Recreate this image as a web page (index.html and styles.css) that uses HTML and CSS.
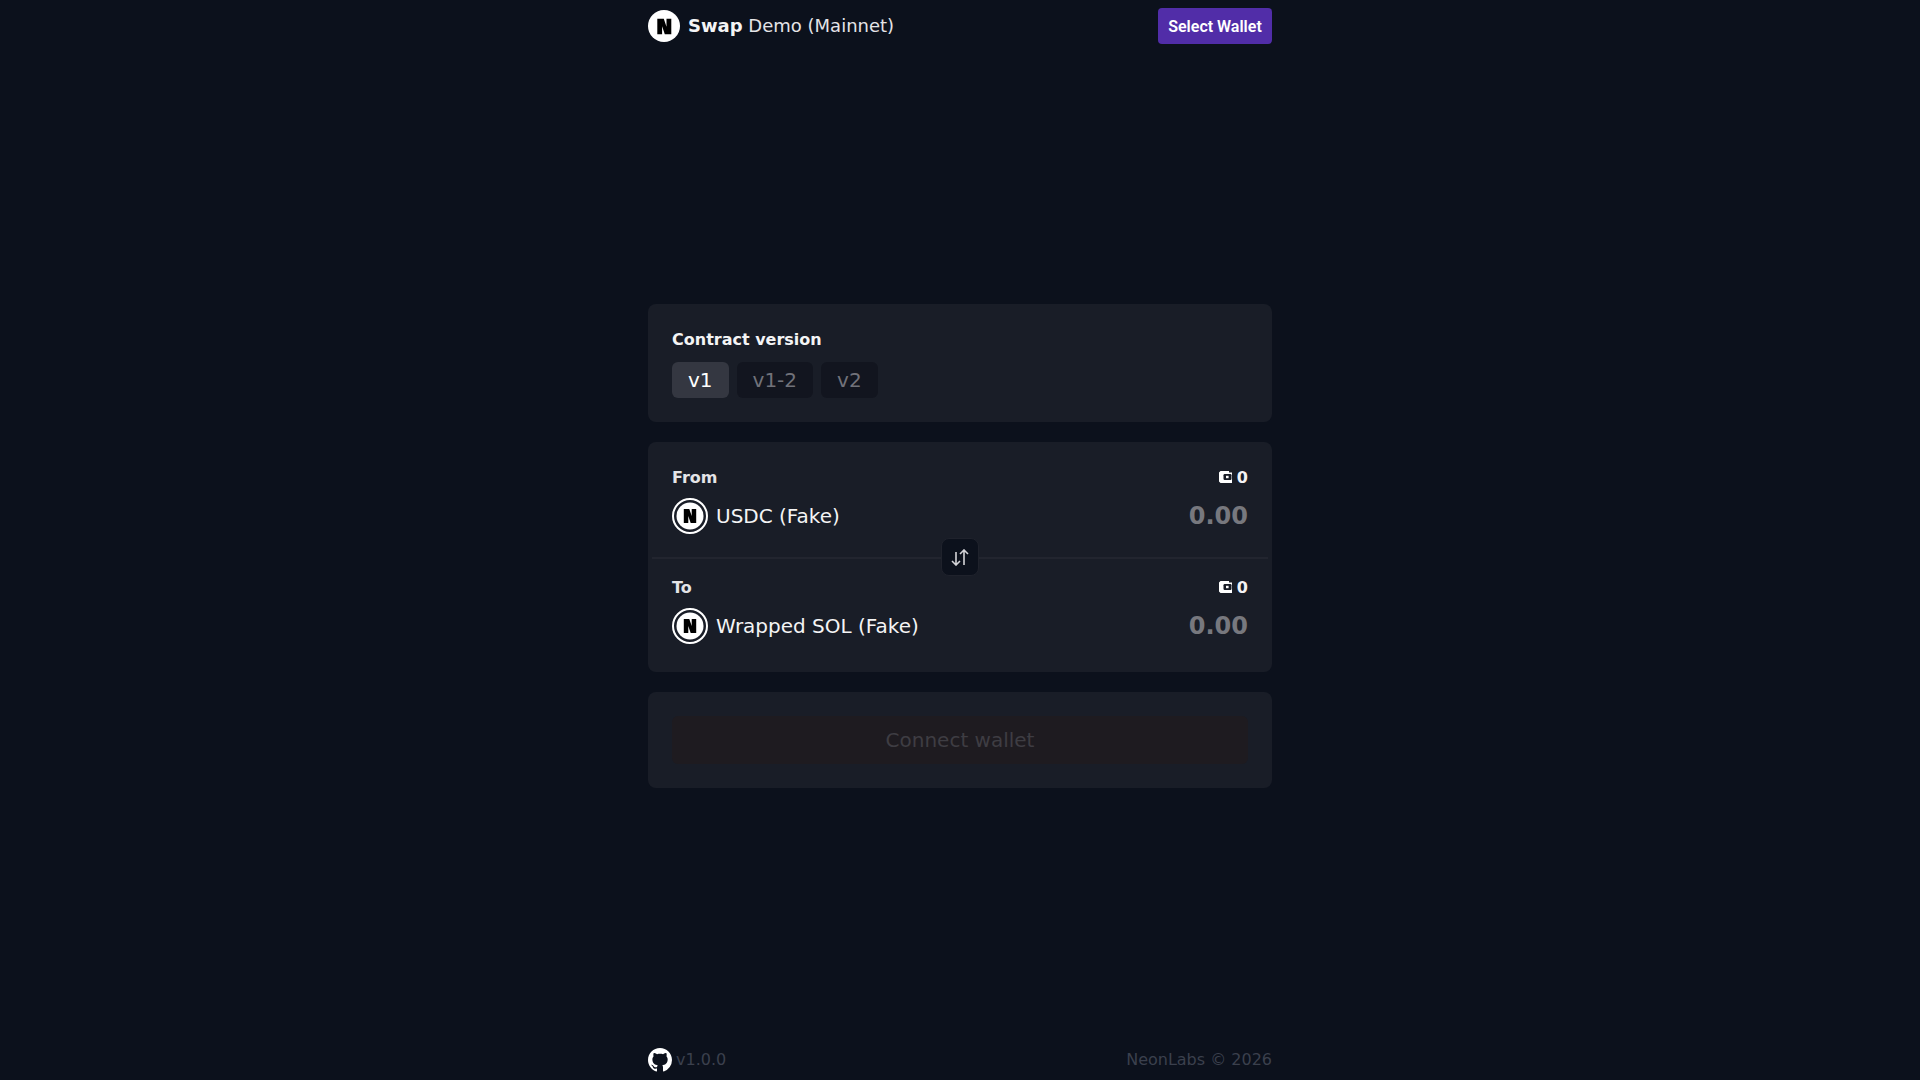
FILE: index.html
```html
<!DOCTYPE html>
<html lang="en">
<head>
    <meta charset="UTF-8">
    <meta name="viewport" content="width=device-width, initial-scale=1.0">
    <title>Swap Demo (Mainnet)</title>
    <link rel="stylesheet" href="styles.css">
</head>
<body>
    <div class="page">
        <header class="topbar">
            <div class="brand">
                <svg class="brand-logo" viewBox="0 0 32 32">
                    <circle cx="16" cy="16" r="16" fill="#fff"/>
                    <path d="M9.300 8.700h6.500l2.700 8v-8h4.800v15.600h-6.500l-2.700-8v8H9.300z" fill="#000"/>
                </svg>
                <div class="brand-name"><strong>Swap</strong> Demo (Mainnet)</div>
            </div>
            <button class="wallet-btn">Select Wallet</button>
        </header>

        <main class="content">
            <section class="card version-card">
                <h3>Contract version</h3>
                <div class="tabs">
                    <div class="tab active">v1</div>
                    <div class="tab">v1-2</div>
                    <div class="tab">v2</div>
                </div>
            </section>

            <section class="card swap-card">
                <div class="swap-side from">
                    <div class="side-row">
                        <span class="side-label">From</span>
                        <span class="balance">
                            <svg class="wallet-icon" viewBox="0 0 13 12">
                                <path d="M0 1.500 1.500 0H10v1.500h3V12H1.500L0 10.500z" fill="#fff"/>
                                <rect x="4.500" y="3" width="8" height="6" rx="1.200" fill="#191d27"/>
                                <rect x="7" y="4.800" width="2.600" height="2.400" fill="#fff"/>
                            </svg>
                            0
                        </span>
                    </div>
                    <div class="token-row">
                        <div class="token">
                            <svg class="token-logo" viewBox="0 0 36 36">
                                <circle cx="18" cy="18" r="17" fill="none" stroke="#fff" stroke-width="2"/>
                                <circle cx="18" cy="18" r="13.500" fill="#fff"/>
                                <path d="M11.800 11h5.500l2.400 7v-7h4.500v14h-5.500l-2.400-7v7h-4.500z" fill="#000"/>
                            </svg>
                            USDC (Fake)
                        </div>
                        <div class="amount">0.00</div>
                    </div>
                </div>

                <div class="divider">
                    <button class="flip-btn">
                        <svg viewBox="0 0 18 17" width="18" height="17" fill="none" stroke="#d4d4d8" stroke-width="1.600">
                            <path d="M5 3v13M1 12l4 4 4-4"/>
                            <path d="M13 16V1M9 5l4-4 4 4"/>
                        </svg>
                    </button>
                </div>

                <div class="swap-side to">
                    <div class="side-row">
                        <span class="side-label">To</span>
                        <span class="balance">
                            <svg class="wallet-icon" viewBox="0 0 13 12">
                                <path d="M0 1.500 1.500 0H10v1.500h3V12H1.500L0 10.500z" fill="#fff"/>
                                <rect x="4.500" y="3" width="8" height="6" rx="1.200" fill="#191d27"/>
                                <rect x="7" y="4.800" width="2.600" height="2.400" fill="#fff"/>
                            </svg>
                            0
                        </span>
                    </div>
                    <div class="token-row">
                        <div class="token">
                            <svg class="token-logo" viewBox="0 0 36 36">
                                <circle cx="18" cy="18" r="17" fill="none" stroke="#fff" stroke-width="2"/>
                                <circle cx="18" cy="18" r="13.500" fill="#fff"/>
                                <path d="M11.800 11h5.500l2.400 7v-7h4.500v14h-5.500l-2.400-7v7h-4.500z" fill="#000"/>
                            </svg>
                            Wrapped SOL (Fake)
                        </div>
                        <div class="amount">0.00</div>
                    </div>
                </div>
            </section>

            <section class="card action-card">
                <button class="connect-btn">Connect wallet</button>
            </section>
        </main>

        <footer class="bottom">
            <div class="release">
                <svg class="github-icon" viewBox="0 0 16 16" fill="#fff">
                    <path d="M8 0C3.580 0 0 3.580 0 8c0 3.540 2.290 6.530 5.470 7.590.4.070.55-.17.55-.38 0-.19-.01-.82-.01-1.490-2.010.37-2.530-.49-2.690-.94-.09-.23-.48-.94-.82-1.130-.28-.15-.68-.52-.01-.53.63-.01 1.080.58 1.230.82.720 1.210 1.870.87 2.330.66.070-.52.280-.87.510-1.070-1.780-.2-3.640-.89-3.640-3.950 0-.87.310-1.590.820-2.150-.08-.2-.36-1.020.08-2.120 0 0 .67-.21 2.200.82.640-.18 1.320-.27 2-.27s1.360.09 2 .27c1.530-1.040 2.200-.82 2.200-.82.440 1.100.160 1.920.080 2.120.51.560.82 1.270.82 2.150 0 3.070-1.870 3.750-3.650 3.950.290.250.540.730.540 1.480 0 1.070-.01 1.930-.01 2.200 0 .210.150.460.550.380A8.010 8.010 0 0 0 16 8c0-4.420-3.580-8-8-8z"/>
                </svg>
                v1.0.0
            </div>
            <div>NeonLabs © 2026</div>
        </footer>
    </div>
</body>
</html>
```

FILE: styles.css
```css
* {
    margin: 0;
    padding: 0;
    box-sizing: border-box;
}

body {
    font-family: 'DejaVu Sans', sans-serif;
    background: #0c111c;
    color: #fff;
    min-height: 100vh;
    overflow: hidden;
}

button {
    font-family: inherit;
    border: none;
}

.page {
    width: 624px;
    height: 1080px;
    margin: 0 auto;
    display: flex;
    flex-direction: column;
}

.topbar {
    height: 52px;
    display: flex;
    align-items: center;
    justify-content: space-between;
}

.brand {
    display: flex;
    align-items: center;
    gap: 8px;
}

.brand-logo {
    width: 32px;
    height: 32px;
}

.brand-name {
    font-size: 18px;
    padding-bottom: 2px;
    color: #e4e4e7;
}

.brand-name strong {
    color: #f4f4f5;
}

.wallet-btn {
    width: 114px;
    height: 36px;
    border-radius: 4px;
    background: #512da8;
    color: #fff;
    font-family: Roboto, sans-serif;
    font-size: 16px;
    font-weight: 600;
}

.content {
    flex: 1;
    display: flex;
    flex-direction: column;
    justify-content: center;
    gap: 20px;
    padding-top: 2px;
}

.card {
    background: #191d27;
    border-radius: 8px;
}

.version-card {
    padding: 24px;
    height: 118px;
}

.version-card h3 {
    font-size: 16px;
    line-height: 24px;
    color: #f4f4f5;
    margin-bottom: 10px;
}

.tabs {
    display: flex;
    gap: 8px;
}

.tab {
    height: 36px;
    padding: 0 16px;
    border-radius: 6px;
    background: #12151f;
    color: #71727a;
    font-size: 20px;
    line-height: 36px;
}

.tab.active {
    background: #343741;
    color: #fff;
}

.swap-card {
    height: 230px;
}

.swap-side {
    padding: 0 24px;
}

.swap-side.from {
    padding-top: 23px;
    height: 115px;
}

.swap-side.to {
    padding-top: 16px;
}

.side-row {
    display: flex;
    align-items: center;
    justify-content: space-between;
    height: 24px;
    margin-bottom: 9px;
    font-size: 16px;
    font-weight: 700;
    color: #e4e4e7;
}

.balance {
    display: flex;
    align-items: center;
    gap: 5px;
    color: #f4f4f5;
}

.wallet-icon {
    width: 13px;
    height: 12px;
}

.token-row {
    display: flex;
    align-items: center;
    justify-content: space-between;
}

.token {
    display: flex;
    align-items: center;
    gap: 8px;
    font-size: 20px;
    color: #f4f4f5;
}

.token-logo {
    width: 36px;
    height: 36px;
}

.amount {
    font-size: 24px;
    font-weight: 700;
    color: #77787e;
}

.divider {
    position: relative;
    height: 2px;
    margin: 0 4px;
    background: #22252f;
}

.flip-btn {
    position: absolute;
    left: 289px;
    top: -19px;
    width: 38px;
    height: 38px;
    border-radius: 8px;
    background: #0c111c;
    border: 1px solid #1f222c;
    display: flex;
    align-items: center;
    justify-content: center;
}

.action-card {
    height: 96px;
    padding: 24px;
}

.connect-btn {
    width: 100%;
    height: 48px;
    border-radius: 6px;
    background: #1e1b20;
    color: #3e3d43;
    font-size: 20px;
}

.bottom {
    height: 42px;
    display: flex;
    align-items: center;
    justify-content: space-between;
    font-size: 16px;
    color: #3b404d;
}

.release {
    display: flex;
    align-items: center;
    gap: 4px;
}

.github-icon {
    width: 24px;
    height: 24px;
    margin-top: 2px;
}
```
